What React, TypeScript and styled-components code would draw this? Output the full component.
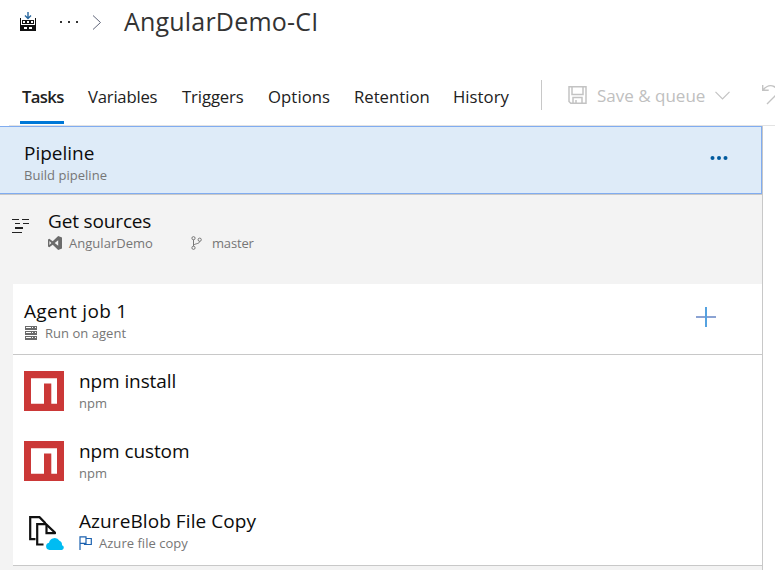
import React from "react";
import styled, { createGlobalStyle, css } from "styled-components";

const GlobalStyle = createGlobalStyle`
  * { box-sizing: border-box; }
  body {
    margin: 0;
    background: #fff;
    color: #0c0c0c;
    font-family: "Open Sans", "Noto Sans", sans-serif;
    font-weight: 400;
    overflow: hidden;
  }
`;

const Page = styled.div`
  width: 775px;
  height: 570px;
  display: flex;
  flex-direction: column;
  overflow: hidden;
`;

const Icon = styled.svg`
  display: block;
  flex: none;
  overflow: visible;
`;

const Breadcrumb = styled.header`
  height: 44px;
  padding-left: 20px;
  display: flex;
  align-items: center;
`;

const BuildGlyph = styled(Icon)`
  margin-top: -1px;
`;

const Ellipsis = styled(Icon)`
  margin-left: 23px;
`;

const Crumb = styled(Icon)`
  margin-left: 13px;
`;

const PageTitle = styled.h1`
  margin: -2px 0 0 23px;
  font-size: 25px;
  line-height: 34px;
  font-weight: 400;
  letter-spacing: 0.2px;
  color: #333;
`;

const Toolbar = styled.nav`
  height: 81px;
  flex: none;
  display: flex;
  padding: 36px 0 0 20px;
`;

const Tabs = styled.div`
  flex: none;
  display: grid;
  grid-template-columns: 68px 94px 86px 86px 99px 88px;
`;

const Tab = styled.div<{ $active?: boolean; $spacing?: number }>`
  justify-self: start;
  height: 44px;
  padding: 4px 0 0;
  font-size: 16.7px;
  line-height: 25px;
  letter-spacing: ${(p) => p.$spacing ?? 0}px;
  white-space: nowrap;
  color: #212121;
  ${(p) =>
    p.$active &&
    css`
      width: 44px;
      padding-left: 2px;
      font-weight: 600;
      border-bottom: 3px solid #0078d7;
    `}
`;

const Divider = styled.div`
  width: 1px;
  height: 30px;
  flex: none;
  background: #c8c8c8;
`;

const ToolbarAction = styled.div`
  height: 30px;
  flex: none;
  margin-left: 26px;
  display: flex;
  align-items: center;
  color: #c0c0c0;
  font-size: 17px;
  line-height: 30px;
  white-space: nowrap;
`;

const ActionLabel = styled.span`
  width: 109px;
  margin: 1px 9px 0 10px;
`;

const UndoIcon = styled(Icon)`
  margin: 4px 0 0 32px;
`;

const HeaderRule = styled.div`
  height: 1px;
  flex: none;
  margin-left: 9px;
  background: #e3e3e3;
`;

const Panel = styled.main`
  width: 763px;
  flex: 1;
  border-right: 1px solid #c8c8c8;
  background: #f3f3f3;
`;

const PipelineRow = styled.section`
  height: 68px;
  padding: 14px 33px 0 24px;
  display: flex;
  justify-content: space-between;
  background: #deebf8;
  border: solid #80acf0;
  border-width: 1px 1px 1px 0;
`;

const PipelineRule = styled.div`
  height: 1px;
  background: #c8c8c8;
`;

const SourcesRow = styled.section`
  height: 89px;
  padding: 14px 0 0 11px;
  display: flex;
`;

const SourcesIcon = styled(Icon)`
  margin: 10px 19px 0 1px;
`;

const Job = styled.section`
  margin-left: 13px;
  background: #fff;
  border-bottom: 1px solid #c8c8c8;
`;

const JobHeader = styled.div`
  height: 71px;
  padding: 15px 45px 0 11px;
  display: flex;
  justify-content: space-between;
  border-bottom: 1px solid #c8c8c8;
`;

const TaskRow = styled.div`
  height: 70px;
  padding: 14px 0 0 11px;
  display: flex;
`;

const TaskIcon = styled(Icon)`
  margin: 2px 15px 0 0;
`;

const ItemTitle = styled.div<{ $spacing?: number }>`
  margin-bottom: 1px;
  font-size: 19px;
  line-height: 24px;
  letter-spacing: ${(p) => p.$spacing ?? 0}px;
  white-space: nowrap;
`;

const ItemMeta = styled.div<{ $gap?: number }>`
  display: flex;
  align-items: center;
  gap: ${(p) => p.$gap ?? 7}px;
  font-size: 13px;
  line-height: 18px;
  letter-spacing: 0.03px;
  color: #767676;
  white-space: nowrap;
`;

const Branch = styled.span`
  display: flex;
  align-items: center;
  gap: 10px;
  margin-left: 31px;
  letter-spacing: -0.15px;
`;

const MoreIcon = styled(Icon)`
  margin-top: 15px;
`;

const AddIcon = styled(Icon)`
  margin-top: 8px;
`;

const BuildIcon = () => (
  <BuildGlyph width="16" height="19" viewBox="0 0 16 19">
    <path d="M8 0v6.500M5 3.500L8 6.500 11 3.500" fill="none" stroke="#27669d" strokeWidth="1.4" />
    <path d="M0 6h1v7h14V6h1v13H0z" fill="#111" />
    <path d="M2 8h12v4H2z" fill="#111" />
    <path d="M3 9h2v2H3zM7 9h2v2H7zM11 9h2v2h-2zM4 15h3v2H4zM9 15h3v2H9z" fill="#fff" />
  </BuildGlyph>
);

const NpmIcon = () => (
  <TaskIcon width="40" height="40" viewBox="0 0 40 40">
    <path fill="#cb3837" d="M0 0h40v40H0z" />
    <path fill="#fff" d="M7 7.300h26v25.400h-5.700V12.500H20v20.200H7z" />
  </TaskIcon>
);

const FileCopyIcon = () => (
  <TaskIcon width="40" height="40" viewBox="0 0 40 40">
    <g fill="none" stroke="#111" strokeWidth="2.200">
      <path d="M11.500 28.200H6.200V6.200h9.300l6 6" />
      <path d="M19.500 33.500h-6.300V13.200h8.800l8.800 8.300v1.500" />
      <path d="M22.500 13.700v8.500h9" />
    </g>
    <path fill="#00bcf2" d="M25.500 39a3.700 3.700 0 0 1-.5-7.300 5.800 5.800 0 0 1 10.500-2 4.500 4.500 0 0 1 2.500 4.500 2.500 2.500 0 0 1 0 4.800z" />
  </TaskIcon>
);

export default function App() {
  return (
    <>
      <GlobalStyle />
      <Page>
        <Breadcrumb>
          <BuildIcon />
          <Ellipsis width="20" height="2" viewBox="0 0 20 2" fill="#333">
            <path d="M1 0h2v2H1zM9 0h2v2H9zM17 0h2v2h-2z" />
          </Ellipsis>
          <Crumb width="9" height="15" viewBox="0 0 9 15" fill="none" stroke="#60667a">
            <path d="M1 .5l7.500 7-7.500 7" />
          </Crumb>
          <PageTitle>AngularDemo-CI</PageTitle>
        </Breadcrumb>

        <Toolbar>
          <Tabs>
            <Tab $active $spacing={-0.65}>Tasks</Tab>
            <Tab $spacing={-0.22}>Variables</Tab>
            <Tab $spacing={-0.1}>Triggers</Tab>
            <Tab $spacing={0.08}>Options</Tab>
            <Tab>Retention</Tab>
            <Tab $spacing={0.05}>History</Tab>
          </Tabs>
          <Divider />
          <ToolbarAction>
            <Icon width="19" height="18" viewBox="0 0 19 18" fill="none" stroke="#c3c3c3" strokeWidth="1.500">
              <path d="M1 .8h17v16.400H2.800L1 15.500zM4 1v7.500h11V1M5 17v-5.500h9V17M8 17v-3" />
            </Icon>
            <ActionLabel>Save &amp; queue</ActionLabel>
            <Icon width="15" height="9" viewBox="0 0 15 9" fill="none" stroke="#c3c3c3" strokeWidth="1.200">
              <path d="M.5.8l7 7 7-7" />
            </Icon>
          </ToolbarAction>
          <UndoIcon width="18" height="21" viewBox="0 0 18 21" fill="none" stroke="#c3c3c3" strokeWidth="1.400">
            <path d="M.7 1v5.300h6M1 6C4 2.500 8 .5 12 2.500c4 2 4 6.500 1.500 9L5 20" />
          </UndoIcon>
        </Toolbar>
        <HeaderRule />

        <Panel>
          <PipelineRow>
            <div>
              <ItemTitle>Pipeline</ItemTitle>
              <ItemMeta>Build pipeline</ItemMeta>
            </div>
            <MoreIcon width="18" height="4" viewBox="0 0 18 4" fill="#005a9e">
              <circle cx="2.500" cy="2" r="2" />
              <circle cx="9" cy="2" r="2" />
              <circle cx="15.500" cy="2" r="2" />
            </MoreIcon>
          </PipelineRow>
          <PipelineRule />

          <SourcesRow>
            <SourcesIcon width="17" height="15" viewBox="0 0 17 15" fill="#222">
              <path d="M0 0h7v1H0zM10 0h7v1h-7zM3 4h5v1H3zM11 4h6v1h-6zM3 8h8v2H3zM0 13h10v1H0z" />
            </SourcesIcon>
            <div>
              <ItemTitle $spacing={-0.15}>Get sources</ItemTitle>
              <ItemMeta>
                <Icon width="14" height="14" viewBox="0 0 14 14" fill="#6b6b6b">
                  <path fillRule="evenodd" d="M10.200 0L14 1.500v11L10.200 14 4.700 8.700 1.300 11.300 0 10.600V3.400l1.300-.7 3.400 2.600zM10.200 4.300L6.700 7l3.500 2.700zM1.400 5v4l2-2z" />
                </Icon>
                AngularDemo
                <Branch>
                  <Icon width="11" height="14" viewBox="0 0 11 14" fill="none" stroke="#777">
                    <circle cx="2.500" cy="2.200" r="1.600" />
                    <circle cx="2.500" cy="11.800" r="1.600" />
                    <circle cx="8.700" cy="3.700" r="1.600" />
                    <path d="M2.500 3.800v6.400M8.700 5.300c0 2.700-4.500 2-6.200 4" />
                  </Icon>
                  master
                </Branch>
              </ItemMeta>
            </div>
          </SourcesRow>

          <Job>
            <JobHeader>
              <div>
                <ItemTitle $spacing={0.32}>Agent job 1</ItemTitle>
                <ItemMeta $gap={8}>
                  <Icon width="13" height="14" viewBox="0 0 13 14">
                    <path fill="#6b6b6b" d="M1 0h12v4H1zM1 5h12v4H1zM1 10h12v4H1z" />
                    <path fill="#fff" d="M2 1h5v1H2zM2 6h5v1H2zM2 11h5v1H2zM8 1h1v1H8zM8 6h1v1H8zM8 11h1v1H8zM11 1h1v1h-1zM11 6h1v1h-1zM11 11h1v1h-1z" />
                  </Icon>
                  Run on agent
                </ItemMeta>
              </div>
              <AddIcon width="21" height="20" viewBox="0 0 21 20" fill="none" strokeWidth="2">
                <path d="M0 10h20" stroke="#8ba3d3" />
                <path d="M10 0v20" stroke="#55a2e0" />
              </AddIcon>
            </JobHeader>
            <TaskRow>
              <NpmIcon />
              <div>
                <ItemTitle $spacing={-0.1}>npm install</ItemTitle>
                <ItemMeta>npm</ItemMeta>
              </div>
            </TaskRow>
            <TaskRow>
              <NpmIcon />
              <div>
                <ItemTitle $spacing={-0.1}>npm custom</ItemTitle>
                <ItemMeta>npm</ItemMeta>
              </div>
            </TaskRow>
            <TaskRow>
              <FileCopyIcon />
              <div>
                <ItemTitle $spacing={0.08}>AzureBlob File Copy</ItemTitle>
                <ItemMeta>
                  <Icon width="13" height="14" viewBox="0 0 13 14" fill="none" stroke="#1c62b0" strokeWidth="1.200">
                    <path d="M1 14V.8h6v6.500H1M7 2.500h5.300v6H5.500V7.300" />
                  </Icon>
                  Azure file copy
                </ItemMeta>
              </div>
            </TaskRow>
          </Job>
        </Panel>
      </Page>
    </>
  );
}
